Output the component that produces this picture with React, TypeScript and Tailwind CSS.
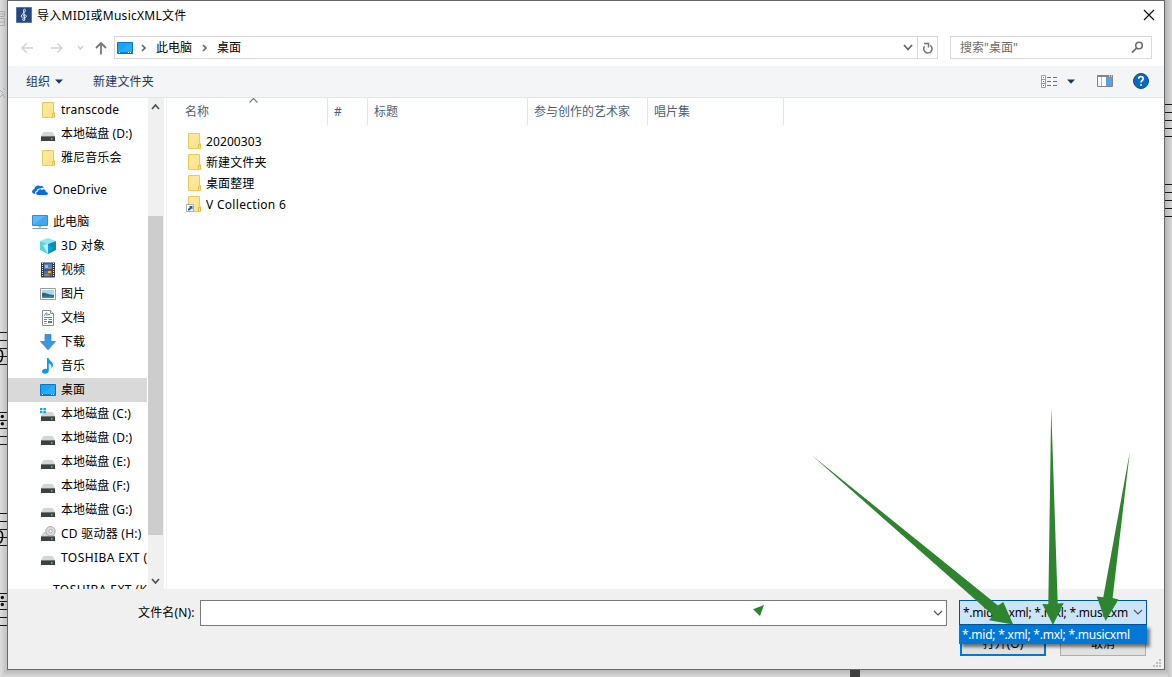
import type { ReactNode } from "react";

const Folder = ({ link = false }: { link?: boolean }) => (
  <svg width="16" height="18" viewBox="0 0 16 18" className="block shrink-0">
    <path d="M2.500 1.500h11v10h1v5h-12z" fill="#ffe48f" stroke="#edc95a" />
    <path d="M3 2h10v3L3 15z" fill="#ffeaa5" opacity=".6" />
    <path d="M12.500 16v-3.500h2V16" fill="#ffe48f" stroke="#e6bd43" />
    {link && (
      <g>
        <path d="M.5 9.500h7v7h-7z" fill="#fff" stroke="#a7adb3" />
        <path d="M2 15.500v-1.500l2-2-1-1h3.500v3.500l-1-1-2 2z" fill="#1f5fa8" />
      </g>
    )}
  </svg>
);

const DriveBody = () => (
  <>
    <path d="M3.500 7h9l2.500 4H1z" fill="#d3d6d9" />
    <path d="M1 11h14v5H1z" fill="#3c4043" />
    <path d="M1 11h14v1H1z" fill="#75797c" />
    <path d="M11 13h1.500v1.500H11z" fill="#4be04b" />
  </>
);

const Drive = () => (
  <svg width="16" height="18" viewBox="0 0 16 18">
    <DriveBody />
  </svg>
);

const SystemDrive = () => (
  <svg width="16" height="18" viewBox="0 0 16 18">
    <DriveBody />
    <path d="M0 3h2.500v2.300H0zM3.300 3H6v2.300H3.300zM0 6h2.500v2.300H0zM3.300 6H6v2.300H3.300z" fill="#19a9e8" />
  </svg>
);

const CdDrive = () => (
  <svg width="16" height="18" viewBox="0 0 16 18">
    <DriveBody />
    <circle cx="10.500" cy="6.200" r="4.700" fill="#dcdcdc" stroke="#9b9b9b" strokeWidth=".8" />
    <circle cx="10.500" cy="6.200" r="1.700" fill="#fff" stroke="#9a9a9a" strokeWidth=".8" />
  </svg>
);

const Desktop = () => (
  <svg width="16" height="18" viewBox="0 0 16 18" className="block shrink-0">
    <path d="M.5 3.500h15v11H.5z" fill="#18a4fb" stroke="#0876c2" />
    <path d="M1 13L14 4h1v9z" fill="#3fb4ff" opacity=".45" />
    <path d="M1 13h14v1H1z" fill="#0a7fd0" />
    <path d="M2 13h1v1H2zM11 13h1v1h-1zM13 13h1v1h-1z" fill="#fff" />
  </svg>
);

const Computer = () => (
  <svg width="16" height="18" viewBox="0 0 16 18">
    <path d="M.5 2.500h15v10H.5z" fill="#5db8f6" stroke="#2e8fcb" />
    <path d="M1 12L13 3h2v9z" fill="#2c9ae8" opacity=".55" />
    <path d="M6.500 13h3v1.500h-3z" fill="#9fb3c3" />
    <path d="M.5 15.500h15" stroke="#7f98aa" />
  </svg>
);

const OneDrive = () => (
  <svg width="16" height="18" viewBox="0 0 16 18">
    <path
      d="M3.500 13C-.8 13-.8 8.500 2.300 8.200 2.500 5 6 3.300 8.400 5.200c1-.5 2.800-.1 3.500 1.600-1.500-.4-2.600 0-3.400.8-2.200-.4-3.700.7-3.800 2.400C3 10.300 2.600 12 3.500 13z"
      fill="#0b6fd0"
    />
    <path
      d="M6.500 14c-3 0-2.900-3.500-.5-3.600.1-2.400 2.900-2.900 3.900-1.500 1.700-1.400 4.100-.2 3.900 2 2.800 0 2.700 3.100.7 3.100z"
      fill="#0b6fd0"
    />
  </svg>
);

const Cube = () => (
  <svg width="16" height="18" viewBox="0 0 16 18">
    <path d="M8 1l8 3-8 3-8-3z" fill="#8fe6ee" />
    <path d="M0 4l8 3v10l-8-4z" fill="#5cd0dc" />
    <path d="M16 4L8 7v10l8-4z" fill="#0a8fa8" />
    <path d="M8 7l5 4-5 6z" fill="#0aa2dc" />
    <path d="M3 8l5-1v10z" fill="#c3f1f3" />
  </svg>
);

const Video = () => (
  <svg width="16" height="18" viewBox="0 0 16 18">
    <path d="M1 1.500h14v15H1z" fill="#39393c" />
    <path d="M4 2.500h8v6H4z" fill="#477fda" />
    <path d="M4 9.500h8v6H4z" fill="#3b6ec8" />
    <path d="M5 4h3v3H5zM8 10h3v2H8z" fill="#e9b544" />
    <path d="M8 6h4v2H8zM4 13h5v2H4z" fill="#b3793a" />
    <path d="M2.500 2v14M13.500 2v14" stroke="#e8e8e8" strokeWidth="1" strokeDasharray="1 1" />
  </svg>
);

const Picture = () => (
  <svg width="16" height="18" viewBox="0 0 16 18">
    <path d="M.5 3.500h15v11H.5z" fill="#fff" stroke="#9a9a9a" />
    <path d="M2 5h12v8H2z" fill="#a9d8f4" />
    <path d="M2 8c4-1 5 2 12 2v3H2z" fill="#2f6a70" />
    <path d="M2 11.500h12V13H2z" fill="#3b86bd" />
  </svg>
);

const Document = () => (
  <svg width="16" height="18" viewBox="0 0 16 18">
    <path d="M2.500 1.500h8l3 3v12h-11z" fill="#fff" stroke="#8d8d8d" />
    <path d="M10.500 1.500v3h3" fill="#eee" stroke="#8d8d8d" />
    <path d="M4 7l2-3h1v3M8 5.500h2M4 8.500h8M4 10.500h3M8.500 10.500H12M4 12.500h3" fill="none" stroke="#3a95cf" />
    <path d="M8 12h4v2H8z" fill="#52779a" />
    <path d="M4 14.500h3" stroke="#8bb8d8" />
  </svg>
);

const Download = () => (
  <svg width="16" height="18" viewBox="0 0 16 18">
    <path d="M5 1.500h6v7h4.500L8 16.800.5 8.500H5z" fill="#3c97e0" stroke="#2a80c9" strokeWidth=".7" />
  </svg>
);

const Music = () => (
  <svg width="16" height="18" viewBox="0 0 16 18">
    <path d="M7 1h1.500c.5 3 4.500 3.500 4.500 7 0 1.500-.7 2.500-1.500 3.500C12 8.500 10.500 7 8.800 6.500V13.500c0 4-6.800 4.300-6.800 1C2 12 5 11.200 7 12z" fill="#0a9bea" />
  </svg>
);

type NavItem = { label: string; icon?: ReactNode; root?: boolean; gap?: boolean; selected?: boolean; tracking?: string };

const navItems: NavItem[] = [
  { label: "transcode", icon: <Folder />, tracking: "tracking-[0.25px]" },
  { label: "本地磁盘 (D:)", icon: <Drive /> },
  { label: "雅尼音乐会", icon: <Folder /> },
  { label: "OneDrive", icon: <OneDrive />, root: true, gap: true },
  { label: "此电脑", icon: <Computer />, root: true, gap: true },
  { label: "3D 对象", icon: <Cube />, tracking: "tracking-[0.3px]" },
  { label: "视频", icon: <Video /> },
  { label: "图片", icon: <Picture /> },
  { label: "文档", icon: <Document /> },
  { label: "下载", icon: <Download /> },
  { label: "音乐", icon: <Music /> },
  { label: "桌面", icon: <Desktop />, selected: true },
  { label: "本地磁盘 (C:)", icon: <SystemDrive /> },
  { label: "本地磁盘 (D:)", icon: <Drive /> },
  { label: "本地磁盘 (E:)", icon: <Drive /> },
  { label: "本地磁盘 (F:)", icon: <Drive /> },
  { label: "本地磁盘 (G:)", icon: <Drive /> },
  { label: "CD 驱动器 (H:)", icon: <CdDrive />, tracking: "tracking-[0.25px]" },
  { label: "TOSHIBA EXT (J:)", icon: <Drive />, tracking: "tracking-[0.42px]" },
  { label: "TOSHIBA EXT (K:)", root: true, gap: true, tracking: "tracking-[0.42px]" },
];

const columns = [
  { label: "名称", width: "w-[149px]" },
  { label: "#", width: "w-[40px]" },
  { label: "标题", width: "w-[160px]" },
  { label: "参与创作的艺术家", width: "w-[120px]" },
  { label: "唱片集", width: "w-[136px]" },
];

const files = [
  { label: "20200303", tracking: "tracking-[0.1px]" },
  { label: "新建文件夹", tracking: "tracking-[0.1px]" },
  { label: "桌面整理", tracking: "tracking-[0.1px]" },
  { label: "V Collection 6", tracking: "tracking-[0.3px]", link: true },
];

const Chevron = ({ d, w = 10, h = 8, color = "#666", stroke = 1.5 }: { d: string; w?: number; h?: number; color?: string; stroke?: number }) => (
  <svg width={w} height={h} viewBox={`0 0 ${w} ${h}`} className="block shrink-0">
    <path d={d} fill="none" stroke={color} strokeWidth={stroke} />
  </svg>
);

const staffLines = (x: number, tops: number[]) =>
  tops.flatMap((top) => [0, 8, 16, 24, 32].map((dy) => <path key={`${x}-${top + dy}`} d={`M${x} ${top + dy + 0.5}h8`} stroke="#151515" />));

const SheetBackdrop = () => (
  <svg width="1172" height="677" viewBox="0 0 1172 677" className="absolute inset-0">
    <defs>
      <linearGradient id="left-shade">
        <stop offset="0" stopColor="#dedede" />
        <stop offset="1" stopColor="#bcbcbc" />
      </linearGradient>
      <linearGradient id="right-shade">
        <stop offset="0" stopColor="#aeaeae" />
        <stop offset="1" stopColor="#d9d9d9" />
      </linearGradient>
      <linearGradient id="bottom-shade" x2="0" y2="1">
        <stop offset="0" stopColor="#b8b8b8" />
        <stop offset="1" stopColor="#dadada" />
      </linearGradient>
    </defs>
    <path d="M0 0h8v677H0z" fill="url(#left-shade)" />
    <path d="M1164 0h8v677h-8z" fill="url(#right-shade)" />
    <path d="M4 670h1164v7H4z" fill="url(#bottom-shade)" />
    <path d="M850 670h10v7h-10z" fill="#3f3f3f" />
    {staffLines(0, [332, 412, 513, 593])}
    {staffLines(1164, [104, 184])}
    <path d="M0 350q3 1 2.500 6T0 362M0 531q3 1 2.500 6T0 543" fill="none" stroke="#111" strokeWidth="1.600" />
    <path d="M0 11.500h4.500v5H0M0 14h4M0 18.500h4.500v7H0M0 22h4" fill="none" stroke="#aaa" />
    <path d="M0 90l3 3M0 97l3-3 2 4M3 88l2 2" fill="none" stroke="#aaa" />
    <g fill="#111">
      <circle cx="2.300" cy="416.500" r="1.700" />
      <circle cx="2.300" cy="423.700" r="1.700" />
      <circle cx="2.300" cy="597.500" r="1.700" />
      <circle cx="2.300" cy="604.500" r="1.700" />
    </g>
  </svg>
);

const AnnotationArrows = () => (
  <svg width="1172" height="677" viewBox="0 0 1172 677" className="pointer-events-none absolute inset-0 z-20" fill="#2f852f">
    <path d="M811.500 455L998 605.500l5.300-3.500 9.900 22.500-24.200-4.200 4-5z" />
    <path d="M1051.200 407l6.500 196.500 6-.5-10.700 22-10.700-21 6 .3z" />
    <path d="M1129.800 452l-17.200 146 5.900 1.500-13 21.500-8.800-24.500 6.600.7z" />
    <path d="M753 609.300l11-4.300-4 11z" />
  </svg>
);

export default function App() {
  return (
    <div className="relative h-[677px] w-[1172px] overflow-hidden bg-[#d4d4d4] pl-[7px] text-[12px] leading-[18px] text-black [font-family:'Noto_Sans','Noto_Sans_CJK_SC',sans-serif]">
      <SheetBackdrop />
      <div className="relative flex h-[670px] w-[1158px] flex-col border border-[#696969] bg-white">
        <div className="flex h-[30px] shrink-0 items-center pl-2 pr-[9px]">
          <svg width="16" height="16" viewBox="0 0 16 16" className="mt-[-2px] shrink-0">
            <path d="M.5.500h15v15H.5z" fill="#24477f" stroke="#5775a6" />
            <path d="M9 13c-3 1.500-3-1.500-1.500-1M8.800 13L7.500 3.500C7.500 1.500 9.500 1.500 9.300 4c-.3 2-4 3-4 5.200 0 2.500 5.200 2.300 5 0C10 7 7 7.500 7.300 9.400" fill="none" stroke="#e3ebf6" strokeWidth="1" />
          </svg>
          <span className="ml-[5px] mt-[-1px] tracking-[0.28px]">导入MIDI或MusicXML文件</span>
          <svg width="12" height="12" viewBox="0 0 12 12" className="ml-auto mt-[-2px]">
            <path d="M1 1l10 10M11 1L1 11" stroke="#111" strokeWidth="1.200" />
          </svg>
        </div>

        <div className="flex h-[35px] shrink-0 items-center pb-[2px] pl-[13px] pr-[12px]">
          <svg width="12" height="12" viewBox="0 0 12 12">
            <path d="M12 6H1M5.500 1.500L1 6l4.500 4.500" fill="none" stroke="#d2d2d2" strokeWidth="1.400" />
          </svg>
          <svg width="12" height="12" viewBox="0 0 12 12" className="ml-[18px]">
            <path d="M0 6h11M6.500 1.500L11 6l-4.500 4.500" fill="none" stroke="#d2d2d2" strokeWidth="1.400" />
          </svg>
          <div className="ml-[14px]"><Chevron d="M1 1l2.500 3L6 1" w={7} h={6} color="#d2d2d2" /></div>
          <svg width="12" height="14" viewBox="0 0 12 14" className="ml-[11px]">
            <path d="M6 13.500V2M1 7l5-5 5 5" fill="none" stroke="#777" strokeWidth="1.800" />
          </svg>
          <div className="ml-[7px] flex h-[23px] w-[824px] shrink-0 items-center border border-[#d9d9d9] pl-[2px]">
            <Desktop />
            <div className="ml-[8px]"><Chevron d="M1 1l3 3-3 3" w={6} h={8} stroke={1.7} /></div>
            <span className="ml-[9px]">此电脑</span>
            <div className="ml-[10px]"><Chevron d="M1 1l3 3-3 3" w={6} h={8} stroke={1.7} /></div>
            <span className="ml-[9px]">桌面</span>
            <div className="ml-auto mr-[4px]"><Chevron d="M1 1l4 4.500L9 1" h={7} stroke={1.8} /></div>
            <div className="flex h-full w-[20px] items-center justify-center border-l border-[#d9d9d9]">
              <svg width="12" height="12" viewBox="0 0 12 12">
                <path d="M2.500 4.200A4.200 4.200 0 1 0 8.300 3.300M2 1.500h4.500v4" fill="none" stroke="#747474" strokeWidth="1.500" />
              </svg>
            </div>
          </div>
          <div className="ml-[12px] flex h-[23px] w-[202px] shrink-0 items-center border border-[#d9d9d9] pl-[9px] pr-[7px] text-[#6d6d6d]">
            搜索"桌面"
            <svg width="13" height="13" viewBox="0 0 13 13" className="ml-auto">
              <circle cx="8" cy="4.500" r="3.300" fill="none" stroke="#6d6d6d" strokeWidth="1.600" />
              <path d="M5.700 6.900L1 11.700" stroke="#6d6d6d" strokeWidth="1.700" />
            </svg>
          </div>
        </div>

        <div className="flex h-[32px] shrink-0 items-center border-b border-[#e5e5e5] bg-[#f4f5f7] pl-[18px] pr-[15px] text-[#1e395b]">
          <span>组织</span>
          <svg width="8" height="5" viewBox="0 0 8 5" className="ml-[5px] mt-[-1px]"><path d="M0 .5h8L4 4.700z" fill="#1e395b" /></svg>
          <span className="ml-[30px] tracking-[0.2px]">新建文件夹</span>
          <svg width="17" height="13" viewBox="0 0 17 13" className="ml-auto mt-[-1px]">
            <path d="M.5.500h4v12h-4zM.5 4.500h4M.5 8.500h4" fill="#fff" stroke="#9b9b9b" />
            <path d="M6 2.500h4M12 2.500h4M6 6.500h4M12 6.500h4M6 10.500h4M12 10.500h4" stroke="#707070" />
            <path d="M2 2h1v1H2z" fill="#31a05a" /><path d="M2 6h1v1H2z" fill="#2c7cd6" /><path d="M2 10h1v1H2z" fill="#e02a2a" />
          </svg>
          <svg width="8" height="5" viewBox="0 0 8 5" className="ml-[9px] mt-[-1px]"><path d="M0 .5h8L4 4.700z" fill="#1e395b" /></svg>
          <svg width="16" height="12" viewBox="0 0 16 12" className="ml-[22px] mt-[-1px]">
            <path d="M.5.500h15v11H.5z" fill="#fff" stroke="#858585" />
            <path d="M0 0h16v2H0z" fill="#858585" /><path d="M12 1h1M14 1h1" stroke="#fff" />
            <path d="M4.500 2v9" stroke="#b5b5b5" />
            <path d="M9 2h6v9H9z" fill="#4ba6ec" />
          </svg>
          <svg width="16" height="16" viewBox="0 0 16 16" className="ml-[20px] mt-[-2px]">
            <circle cx="8" cy="8" r="7.500" fill="#0668c9" stroke="#104a86" />
            <path d="M5.700 5.700C5.800 2.900 10.200 3 10.200 5.700 10.200 7.500 8 7.500 8 9.500M8 11v1.800" fill="none" stroke="#fff" strokeWidth="1.700" />
          </svg>
        </div>

        <div className="flex h-[491px] shrink-0">
          <div className="h-full w-[139px] shrink-0 overflow-hidden">
            {navItems.map((item, i) => (
              <div
                key={i}
                className={`flex h-[24px] items-center whitespace-nowrap ${item.tracking ?? "tracking-[0.1px]"} ${item.root ? "pl-[24px]" : "pl-[32px]"} ${item.gap ? "mt-[8px]" : ""} ${item.selected ? "bg-[#d9d9d9]" : ""}`}
              >
                <div className="w-[16px] shrink-0">{item.icon}</div>
                <span className="ml-[5px]">{item.label}</span>
              </div>
            ))}
          </div>
          <div className="ml-px flex h-full w-[16px] shrink-0 flex-col items-start bg-[#f0f0f0]">
            <div className="flex h-[118px] w-[15px] justify-center pt-[5px]"><Chevron d="M1 6l3.500-4L8 6" w={9} h={7} color="#505050" stroke={1.8} /></div>
            <div className="h-[319px] w-[15px] bg-[#cdcdcd]" />
            <div className="mt-auto flex h-[11px] w-[15px] justify-center"><Chevron d="M1 1l3.500 4L8 1" w={9} h={7} color="#505050" stroke={1.8} /></div>
          </div>
          <div className="ml-[2px] flex h-full flex-1 flex-col border-l border-[#f0f0f0]">
            <div className="flex h-[27px] shrink-0 pl-[12px] text-[#4c607a]">
              {columns.map((c, i) => (
                <div key={c.label} className={`relative flex h-full items-center border-r border-[#e5e5e5] pl-[6px] ${c.width}`}>
                  {c.label}
                  {i === 0 && (
                    <div className="absolute left-[70px] top-0"><Chevron d="M.5 4.500l4-4 4 4" w={9} h={6} color="#777" stroke={1.1} /></div>
                  )}
                </div>
              ))}
            </div>
            <div className="flex flex-col pl-[19px] pt-[6px]">
              {files.map((f) => (
                <div key={f.label} className={`flex h-[21px] items-center ${f.tracking}`}>
                  <div className="mt-[-2px]"><Folder link={f.link} /></div>
                  <span className="ml-[4px]">{f.label}</span>
                </div>
              ))}
            </div>
          </div>
        </div>

        <div className="relative flex flex-1 items-start bg-[#f0f0f0] pl-[130px] pt-[11px]">
          <span className="w-[62px] shrink-0 whitespace-nowrap pt-[4px] tracking-[0.15px]">文件名(N):</span>
          <div className="flex h-[26px] w-[747px] items-center justify-end border border-[#7a7a7a] bg-white pr-[3px]">
            <Chevron d="M1 1l4 4 4-4" h={7} color="#555" stroke={1.2} />
          </div>
          <div className="ml-[12px] flex w-[188px] shrink-0 flex-col">
            <div className="flex h-[25px] items-center justify-between border border-[#005499] bg-[#cce4f7] pl-[3px] pr-[3px]">
              <span className="whitespace-nowrap tracking-[-0.24px]">*.mid; *.xml; *.mxl; *.musicxm</span>
              <Chevron d="M1 1l4 4 4-4" h={7} color="#555" stroke={1.2} />
            </div>
            <div className="mt-[6px] flex justify-between px-px">
              <div className="flex h-[25px] w-[86px] items-center justify-center border-2 border-[#0078d7] bg-[#e1e1e1]">打开(O)</div>
              <div className="flex h-[25px] w-[86px] items-center justify-center border border-[#adadad] bg-[#e1e1e1]">取消</div>
            </div>
          </div>
          <div className="absolute left-[951px] top-[36px] z-10 flex h-[19px] w-[188px] items-center whitespace-nowrap bg-[#0078d7] pl-[3px] tracking-[-0.24px] text-white shadow-[3px_3px_3px_rgba(0,0,0,0.5)]">
            *.mid; *.xml; *.mxl; *.musicxml
          </div>
          <svg width="8" height="8" viewBox="0 0 8 8" className="absolute bottom-[2px] right-[3px]">
            <path d="M6 0h2v2H6zM3 3h2v2H3zM6 3h2v2H6zM0 6h2v2H0zM3 6h2v2H3zM6 6h2v2H6z" fill="#bdbdbd" />
          </svg>
        </div>
      </div>
      <AnnotationArrows />
    </div>
  );
}
